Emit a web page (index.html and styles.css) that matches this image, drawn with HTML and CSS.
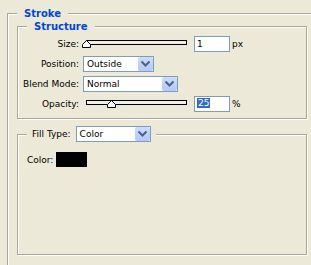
FILE: index.html
```html
<!DOCTYPE html>
<html>
<head>
  <title>Stroke</title>
  <link rel="stylesheet" href="styles.css">
</head>
<body>
  <fieldset class="group outer">
    <legend class="title">Stroke</legend>

    <fieldset class="group inner">
      <legend class="title">Structure</legend>
      <div class="rows">
        <div class="row">
          <span class="label">Size:</span>
          <div class="slider">
            <div class="track"></div>
            <svg class="thumb" style="left: -1px" width="9" height="8" viewBox="0 0 9 8"><path d="M4.5 0.5 L8.5 4.5 L8.5 7.5 L0.5 7.5 L0.5 4.5 Z"/></svg>
          </div>
          <div class="field">1</div>
          <span class="unit">px</span>
        </div>
        <div class="row">
          <span class="label">Position:</span>
          <div class="select position">
            <span class="select-text">Outside</span>
            <span class="select-btn"><svg width="15" height="14" viewBox="0 0 15 14"><path d="M3.5 4.5 L7.5 8.5 L11.5 4.5"/></svg></span>
          </div>
        </div>
        <div class="row">
          <span class="label">Blend Mode:</span>
          <div class="select blend">
            <span class="select-text">Normal</span>
            <span class="select-btn"><svg width="15" height="14" viewBox="0 0 15 14"><path d="M3.5 4.5 L7.5 8.5 L11.5 4.5"/></svg></span>
          </div>
        </div>
        <div class="row">
          <span class="label">Opacity:</span>
          <div class="slider">
            <div class="track"></div>
            <svg class="thumb" style="left: 24px" width="9" height="8" viewBox="0 0 9 8"><path d="M4.5 0.5 L8.5 4.5 L8.5 7.5 L0.5 7.5 L0.5 4.5 Z"/></svg>
          </div>
          <div class="field"><span class="selected">25</span></div>
          <span class="unit">%</span>
        </div>
      </div>
    </fieldset>

    <fieldset class="group inner fill">
      <legend class="fill-legend">
        <span>Fill Type:</span>
        <div class="select filltype">
          <span class="select-text">Color</span>
          <span class="select-btn"><svg width="15" height="14" viewBox="0 0 15 14"><path d="M3.5 4.5 L7.5 8.5 L11.5 4.5"/></svg></span>
        </div>
      </legend>
      <div class="color-row">
        <span>Color:</span>
        <div class="swatch"></div>
      </div>
    </fieldset>
  </fieldset>
</body>
</html>
```

FILE: styles.css
```css
html { overflow: hidden; }
body { margin: 0; background-color: #ece9d8; font-family: "DejaVu Sans", Tahoma, sans-serif; font-size: 9px; color: #000; }

.group {
  margin: 0;
  padding: 0;
  min-width: 0;
  border: 1px solid #aca899;
  box-shadow: 1px 1px 0 #fff, inset 1px 1px 0 #fff;
  box-sizing: border-box;
}
.title {
  margin-left: 9px;
  padding: 0 7px;
  height: 13px;
  line-height: 13px;
  font-size: 10px;
  font-weight: bold;
  color: #0046d5;
  background-color: #ece9d8;
}

/* the outer group is cut off by the window on the right and bottom */
.outer {
  margin: 7px 0 0 7px;
  width: 304px;
  height: 258px;
  border-right: none;
  border-bottom: none;
  box-shadow: inset 1px 1px 0 #fff;
}
.inner { margin-left: 9px; width: 290px; }

.rows { display: flex; flex-direction: column; gap: 4px; padding: 3px 0 6px 0; }
.row { display: flex; align-items: center; height: 16px; }
.label { width: 61px; margin-right: 4px; text-align: right; white-space: nowrap; }

.slider { position: relative; width: 104px; height: 16px; margin-right: 7px; }
.track {
  margin: 4px 0 0 3px;
  width: 101px;
  height: 5px;
  box-sizing: border-box;
  border: 1px solid #000;
  background-color: #f1efe2;
}
.thumb { position: absolute; top: 4px; }
.thumb path { fill: #fff; stroke: #000; stroke-width: 1; }

.field {
  width: 36px;
  height: 16px;
  box-sizing: border-box;
  border: 1px solid #7f9db9;
  background-color: #fff;
  padding-left: 2px;
  line-height: 14px;
}
.selected { display: inline-block; background-color: #316ac5; color: #fff; height: 10px; line-height: 10px; padding: 0 1px; vertical-align: 1px; }
.unit { margin-left: 2px; }

.select {
  display: flex;
  height: 16px;
  box-sizing: border-box;
  border: 1px solid #7f9db9;
  background-color: #fff;
}
.select-text { flex: 1; padding-left: 3px; line-height: 14px; white-space: nowrap; }
.select-btn {
  width: 15px;
  height: 14px;
  box-sizing: border-box;
  border-radius: 2px;
  background: linear-gradient(#cddcfc, #b4c8f6);
}
.select-btn svg { display: block; }
.select-btn path { fill: none; stroke: #4d6185; stroke-width: 2; }
.position { width: 71px; }
.blend { width: 95px; }
.filltype { width: 75px; margin-left: 5px; }

.fill { margin-top: 7px; height: 129px; }
.fill-legend {
  display: flex;
  align-items: center;
  margin-left: 9px;
  padding: 0 5px;
  height: 16px;
  background-color: #ece9d8;
}
.color-row { display: flex; align-items: center; padding: 10px 0 0 9px; }
.swatch { width: 31px; height: 15px; margin-left: 3px; background-color: #000; }
```
